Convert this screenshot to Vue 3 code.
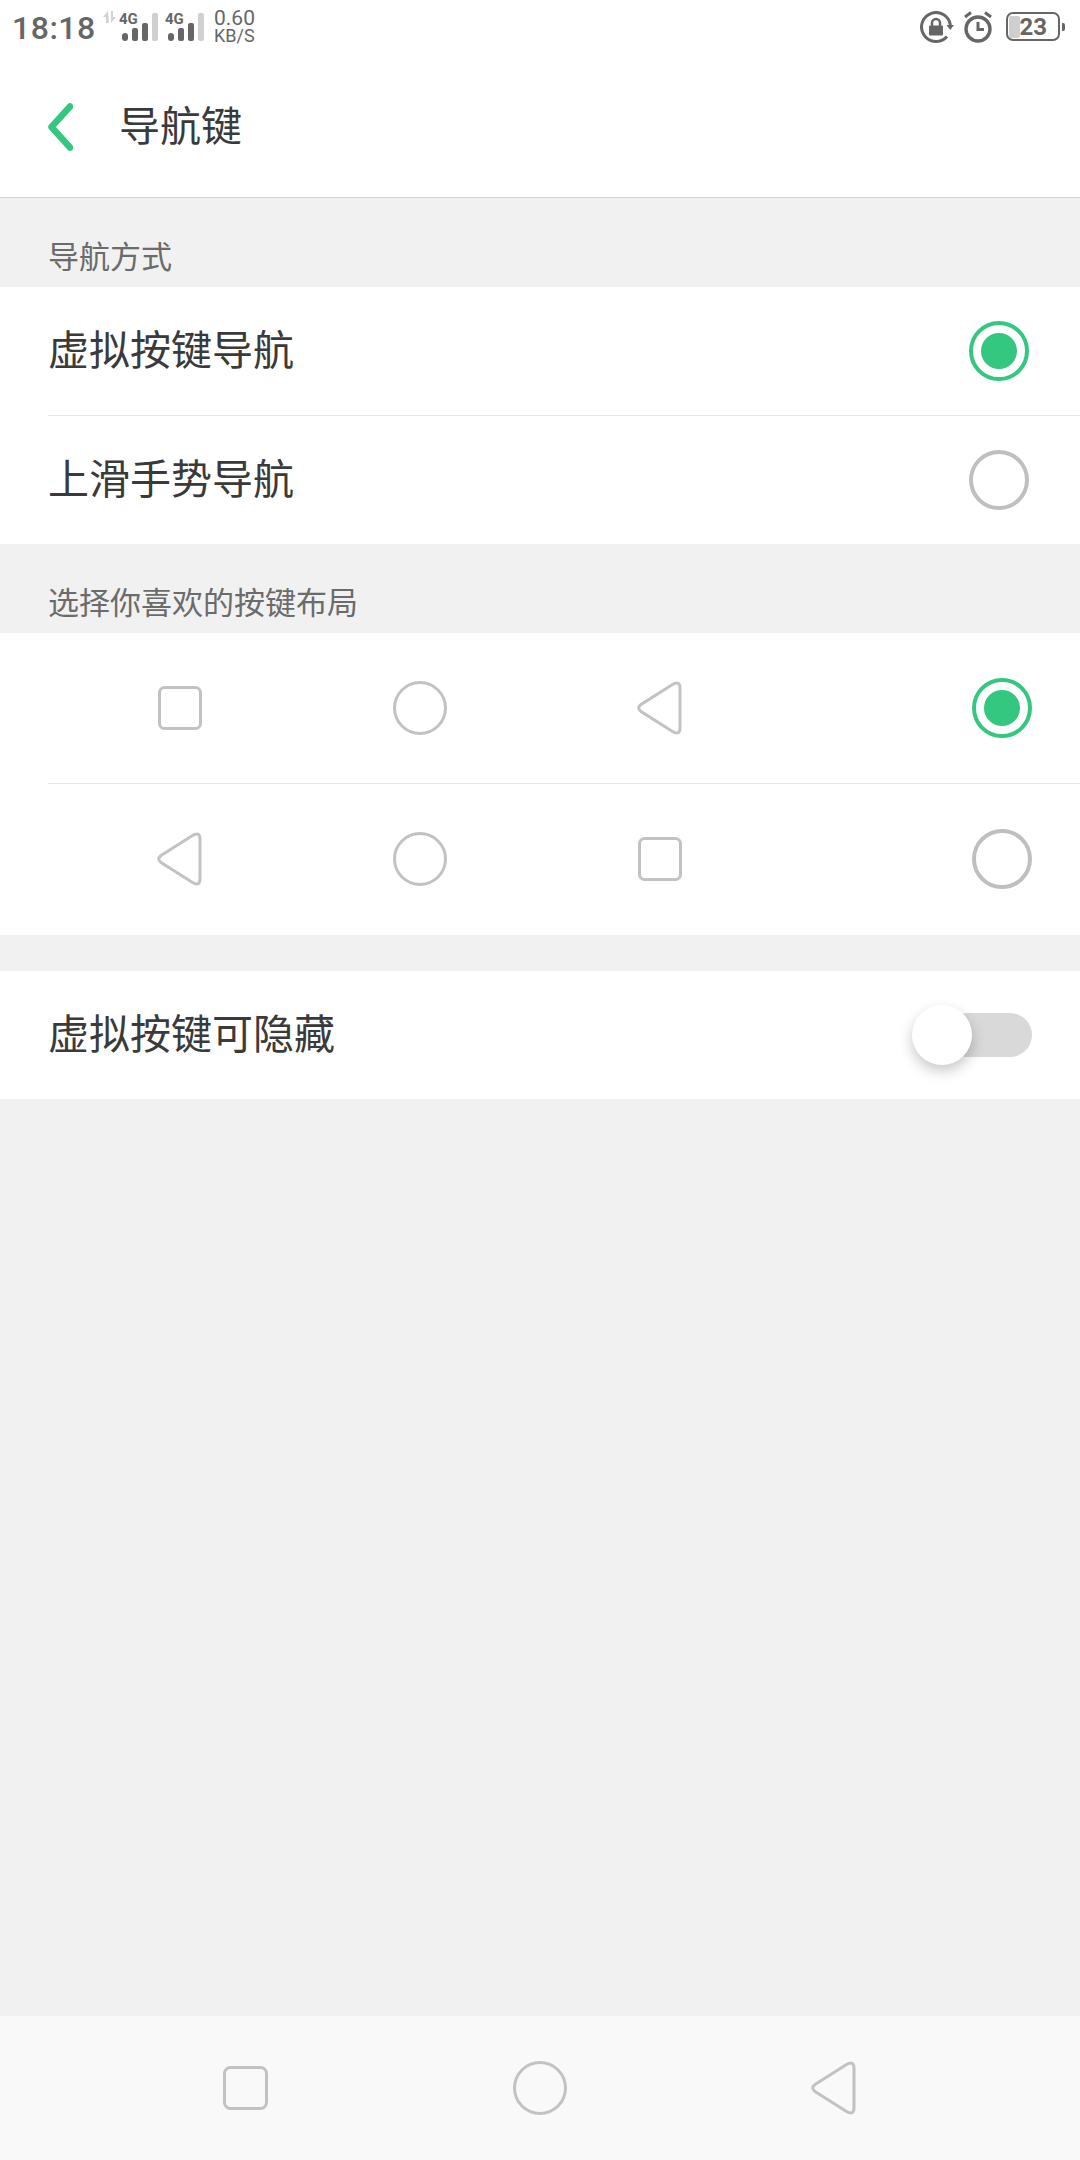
<template>
  <div class="page">
    <div class="status-bar">
      <span class="time">18:18</span>
      <svg class="signal" width="20" height="50" viewBox="0 0 20 50" fill="#d2d2d2">
        <path d="M9 11 L4 17 H7 V23 H10 Z" />
        <path d="M12 23 L17 17 H14 V11 H12 Z" />
      </svg>
      <svg v-for="sim in 2" :key="sim" class="signal" width="46" height="50" viewBox="0 0 46 50">
        <text x="0" y="23.5" class="net">4G</text>
        <rect x="3" y="33" width="6" height="8" rx="3" fill="#666" />
        <rect x="13" y="28" width="6" height="13" rx="2" fill="#666" />
        <rect x="23" y="23" width="6" height="18" rx="2" fill="#666" />
        <rect x="33" y="13" width="6" height="28" rx="2" fill="#d0d0d0" />
      </svg>
      <div class="speed">
        <span class="speed-num">0.60</span>
        <span class="speed-unit">KB/S</span>
      </div>
      <div class="status-right">
        <svg width="34" height="32" viewBox="0 0 34 32" fill="none">
          <path d="M27 25.5 A14.5 14.5 0 1 1 30.4 14" stroke="#666" stroke-width="3" />
          <path d="M26.5 14 h7.5 l-3.7 5 z" fill="#666" />
          <path d="M12 15 V12 a4 4 0 0 1 8 0 V15" stroke="#666" stroke-width="2.5" />
          <rect x="9" y="14.5" width="14" height="10" rx="1" fill="#666" />
        </svg>
        <svg class="alarm" width="30" height="32" viewBox="0 0 30 32" fill="none">
          <circle cx="15" cy="18" r="12" stroke="#666" stroke-width="3.4" />
          <path d="M15 11 V18.5 H21" stroke="#666" stroke-width="3" />
          <path d="M2 6 L8 1.5 M28 6 L22 1.5" stroke="#666" stroke-width="3" />
        </svg>
        <div class="battery">
          <span class="battery-fill"></span>
          <span class="battery-num">23</span>
        </div>
        <span class="battery-tip"></span>
      </div>
    </div>

    <div class="header">
      <svg class="back" width="25" height="48" viewBox="0 0 25 48" fill="none">
        <path d="M22 3.5 L3.5 24 L22 44.5" stroke="#33c77f" stroke-width="6.5" stroke-linecap="round" stroke-linejoin="round" />
      </svg>
      <span class="title">导航键</span>
    </div>

    <div class="section-label">导航方式</div>
    <div class="group">
      <div v-for="(item, i) in modes" :key="item.label" class="row" :class="{ line: i > 0 }">
        <span class="row-text">{{ item.label }}</span>
        <span class="radio" :class="{ on: item.on }"></span>
      </div>
    </div>

    <div class="section-label">选择你喜欢的按键布局</div>
    <div class="group">
      <div v-for="(layout, i) in layouts" :key="i" class="layout-row" :class="{ line: i > 0 }">
        <div v-for="icon in layout.icons" :key="icon" class="layout-cell">
          <svg width="60" height="60" viewBox="0 0 60 60" fill="none" stroke="#c2c2c2" stroke-width="3">
            <rect v-if="icon === 'square'" x="9.5" y="9.5" width="41" height="41" rx="5" />
            <circle v-else-if="icon === 'circle'" cx="30" cy="30" r="25.5" />
            <path v-else d="M42.5 6.5 Q50 2.5 50 10 V50 Q50 57.5 42.5 53.5 L11 33.5 Q6.5 30 11 26.5 Z" />
          </svg>
        </div>
        <span class="radio layout-radio" :class="{ on: layout.on }"></span>
      </div>
    </div>

    <div class="group hide-group">
      <div class="row">
        <span class="row-text">虚拟按键可隐藏</span>
        <div class="switch"><span class="thumb"></span></div>
      </div>
    </div>

    <div class="nav-bar">
      <svg v-for="icon in ['square', 'circle', 'back']" :key="icon" width="60" height="60" viewBox="0 0 60 60" fill="none" stroke="#c2c2c2" stroke-width="3">
        <rect v-if="icon === 'square'" x="8.5" y="9.5" width="42" height="41" rx="6" />
        <circle v-else-if="icon === 'circle'" cx="30" cy="30" r="25.5" />
        <path v-else d="M42.5 6.5 Q50 2.5 50 10 V50 Q50 57.5 42.5 53.5 L11 33.5 Q6.5 30 11 26.5 Z" />
      </svg>
    </div>
  </div>
</template>

<script setup>
const modes = [
  { label: '虚拟按键导航', on: true },
  { label: '上滑手势导航', on: false },
];

const layouts = [
  { icons: ['square', 'circle', 'back'], on: true },
  { icons: ['back', 'circle', 'square'], on: false },
];
</script>

<style>
html,
body {
  margin: 0;
  background: #f1f1f1;
}
</style>

<style scoped>
.page {
  width: 1080px;
  height: 2160px;
  display: flex;
  flex-direction: column;
  background: #f1f1f1;
  font-family: "Noto Sans CJK SC", "Liberation Sans", sans-serif;
  overflow: hidden;
}

.status-bar {
  height: 60px;
  display: flex;
  align-items: flex-start;
  background: white;
  color: #666;
  font-family: Roboto, "Liberation Sans", sans-serif;
}

.time {
  margin: 9px 0 0 12px;
  width: 87px;
  font-size: 32px;
  line-height: 38px;
  font-weight: 500;
  letter-spacing: 0.5px;
}

.signal {
  flex: none;
}

.net {
  font-family: Roboto, "Liberation Sans", sans-serif;
  font-size: 15px;
  font-weight: 700;
  fill: #666;
}

.speed {
  width: 46px;
  margin-left: 3px;
  display: flex;
  flex-direction: column;
  padding-top: 8px;
}

.speed-num {
  font-size: 21px;
  line-height: 20px;
}

.speed-unit {
  font-size: 18px;
  line-height: 15px;
}

.status-right {
  margin-left: auto;
  margin-top: 11px;
  display: flex;
  align-items: flex-start;
}

.alarm {
  margin-left: 9px;
}

.battery {
  position: relative;
  width: 54px;
  height: 29px;
  margin: 1px 0 0 13px;
  box-sizing: border-box;
  border: 2.5px solid #666;
  border-radius: 7px;
  display: flex;
  justify-content: flex-end;
  align-items: center;
}

.battery-fill {
  position: absolute;
  left: 1px;
  top: 1.5px;
  bottom: 1.5px;
  width: 11px;
  background: #cfcfcf;
  border-radius: 2px;
}

.battery-num {
  position: relative;
  margin-right: 11px;
  font-size: 24px;
  line-height: 24px;
  font-weight: 700;
}

.battery-tip {
  width: 3px;
  height: 8px;
  margin: 12px 15px 0 2px;
  background: #666;
  border-radius: 0 2px 2px 0;
}

.header {
  height: 138px;
  display: flex;
  align-items: center;
  box-sizing: border-box;
  padding-left: 48px;
  background: white;
  border-bottom: 1px solid #d4d4d4;
}

.back {
  flex: none;
  margin-top: -3px;
}

.title {
  margin: -12px 0 0 46px;
  font-size: 41px;
  color: #3a3a3a;
}

.section-label {
  height: 89px;
  box-sizing: border-box;
  padding: 35px 0 0 48px;
  font-size: 31px;
  line-height: 44px;
  color: #6b6b6b;
}

.group {
  background: white;
}

.row {
  height: 128px;
  display: flex;
  align-items: center;
  justify-content: space-between;
  padding: 0 48px;
  position: relative;
}

.row-text {
  margin-top: -8px;
  font-size: 41px;
  color: #3a3a3a;
}

.line::before {
  content: "";
  position: absolute;
  left: 48px;
  right: 0;
  top: -1px;
  height: 1px;
  background: #e8e8e8;
}

.row.line {
  margin-top: 1px;
}

.radio {
  width: 60px;
  height: 60px;
  box-sizing: border-box;
  border: 4px solid #bfbfbf;
  border-radius: 50%;
  display: flex;
  align-items: center;
  justify-content: center;
  margin-right: 3px;
}

.radio.on {
  border-color: #33c77f;
}

.radio.on::after {
  content: "";
  width: 36px;
  height: 36px;
  border-radius: 50%;
  background: #33c77f;
}

.layout-row {
  height: 150px;
  display: flex;
  align-items: center;
  padding-left: 60px;
  position: relative;
}

.layout-row.line {
  margin-top: 1px;
  padding-bottom: 1px;
}

.layout-cell {
  width: 240px;
  display: flex;
  justify-content: center;
}

.layout-radio {
  margin-left: auto;
  margin-right: 48px;
}

.hide-group {
  margin-top: 36px;
}

.switch {
  position: relative;
  width: 88px;
  height: 44px;
  background: #d9d9d9;
  border-radius: 22px;
}

.thumb {
  position: absolute;
  left: -32px;
  top: -8px;
  width: 60px;
  height: 60px;
  background: white;
  border-radius: 50%;
  box-shadow: 0 6px 14px rgba(0, 0, 0, 0.22);
}

.nav-bar {
  margin-top: auto;
  height: 144px;
  display: flex;
  align-items: center;
  gap: 234px;
  padding-left: 216px;
  background: #f9f9f9;
}
</style>
